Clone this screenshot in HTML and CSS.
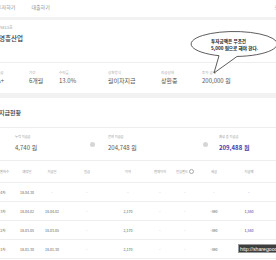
FILE: index.html
```html
<!DOCTYPE html>
<html lang="ko">
<head>
<meta charset="utf-8">
<link rel="stylesheet" href="styles.css">
</head>
<body>
<div class="page">
  <nav class="nav">
    <span>투자하기</span>
    <span>대출하기</span>
    <span class="nav-end">로그인</span>
  </nav>
  <div class="band"></div>

  <section class="head">
    <div class="loan-no">5813호</div>
    <div class="loan-name">영흥산업</div>
  </section>

  <section class="info">
    <div class="info-item"><div class="lbl">등급</div><div class="val">A+</div></div>
    <div class="info-item"><div class="lbl">기간</div><div class="val">6개월</div></div>
    <div class="info-item"><div class="lbl">수익률</div><div class="val">13.0%</div></div>
    <div class="info-item"><div class="lbl">상환방식</div><div class="val">월이자지급</div></div>
    <div class="info-item"><div class="lbl">지급상태</div><div class="val">상환중</div></div>
    <div class="info-item"><div class="lbl">투자 금액</div><div class="val">200,000 원</div></div>
  </section>
  <div class="band band-thick"></div>

  <h2 class="title">지급현황</h2>

  <section class="summary">
    <div class="sum-item first"><div class="sum-lbl">누적 지급금</div><div class="sum-val">4,740 원</div></div>
    <span class="sum-op"></span>
    <div class="sum-item second"><div class="sum-lbl">잔여 지급금</div><div class="sum-val">204,748 원</div></div>
    <span class="sum-op"></span>
    <div class="sum-item third"><div class="sum-lbl">예상 총 지급금</div><div class="sum-val total">209,488 원</div></div>
  </section>

  <div class="table">
    <div class="tr th">
      <span>상환차수</span><span>예정일</span><span>지급일</span><span>원금</span><span>이자</span><span>연체이자</span><span>안심펀드 <i class="q"></i></span><span>세금</span><span>지급액</span>
    </div>
    <div class="tr">
      <span>4차</span><span>18.04.30</span><span class="dash">-</span><span class="dash">-</span><span class="dash">-</span><span class="dash">-</span><span class="dash">-</span><span class="dash">-</span><span class="pay">-</span>
    </div>
    <div class="tr">
      <span>3차</span><span>18.04.02</span><span>18.04.02</span><span class="dash">-</span><span>2,170</span><span class="dash">-</span><span class="dash">-</span><span>-590</span><span class="pay">1,580</span>
    </div>
    <div class="tr">
      <span>2차</span><span>18.03.05</span><span>18.03.05</span><span class="dash">-</span><span>2,170</span><span class="dash">-</span><span class="dash">-</span><span>-590</span><span class="pay">1,580</span>
    </div>
    <div class="tr">
      <span>1차</span><span>18.01.30</span><span>18.01.30</span><span class="dash">-</span><span>2,170</span><span class="dash">-</span><span class="dash">-</span><span>-590</span><span class="pay">1,580</span>
    </div>
  </div>
</div>

<svg class="bubble" width="276" height="80" viewBox="0 0 276 80">
  <path d="M219,55.7 A43,12.5 0 1 1 237,56.47 L214,73 Z" fill="#fff" stroke="#333" stroke-width="0.8"/>
</svg>
<div class="bubble-text">
  <div>투자금액은 무조건</div>
  <div>5,000 원으로 해야 한다.</div>
</div>

<div class="tooltip">http://sharegoodinfo.tistory.com</div>
</body>
</html>
```

FILE: styles.css
```css
html, body {
  margin: 0;
  padding: 0;
}
body {
  width: 276px;
  height: 260px;
  overflow: hidden;
  position: relative;
  background: #fff;
  font-family: "Noto Sans CJK KR", "Noto Sans", sans-serif;
  color: #555;
}
.page {
  width: 276px;
}

/* nav */
.nav {
  height: 17px;
  width: 291px;
  margin-left: -3px;
  display: flex;
  align-items: center;
  gap: 16px;
  font-size: 5px;
  line-height: 6px;
  color: #8a8a8a;
  padding-bottom: 3px;
  box-sizing: border-box;
}
.nav-end {
  margin-left: auto;
  color: #aaa;
}
.band {
  height: 3px;
  background: #f2f2f2;
}
.band-thick {
  height: 5px;
}

/* head */
.head {
  height: 43px;
  box-sizing: border-box;
  border-bottom: 1px solid #eeeeee;
  padding-top: 4px;
}
.loan-no {
  font-size: 4px;
  line-height: 6px;
  color: #999;
}
.loan-name {
  margin-top: 3.5px;
  margin-left: -1px;
  font-size: 6.5px;
  line-height: 8px;
  color: #333;
  font-weight: 500;
}

/* info */
.info {
  height: 30px;
  box-sizing: border-box;
  padding-top: 6.5px;
  margin-left: -3px;
  display: grid;
  grid-template-columns: 32px 30px 49px 53px 41px 1fr;
}
.lbl {
  font-size: 3.5px;
  line-height: 5px;
  color: #aaa;
  white-space: nowrap;
}
.val {
  margin-top: 2px;
  font-size: 6px;
  line-height: 8px;
  color: #555;
  white-space: nowrap;
}

/* title */
.title {
  margin: 0;
  height: 30px;
  box-sizing: border-box;
  border-bottom: 1px solid #eeeeee;
  padding-top: 11px;
  margin-left: -1px;
  font-size: 6px;
  line-height: 8px;
  font-weight: 500;
  color: #333;
}

/* summary */
.summary {
  height: 33px;
  box-sizing: border-box;
  border-bottom: 1px solid #eeeeee;
  padding-top: 7px;
  display: flex;
  align-items: flex-start;
}
.sum-item.first { margin-left: 15px; width: 75px; }
.sum-item.second { margin-left: 13px; width: 95px; }
.sum-item.third { margin-left: 11px; }
.sum-op {
  width: 5px;
  height: 5px;
  border-radius: 50%;
  background: #d6d6d6;
  margin-top: 6.5px;
  flex: none;
}
.sum-lbl {
  font-size: 3.2px;
  line-height: 4px;
  color: #999;
  white-space: nowrap;
}
.sum-val {
  margin-top: 5px;
  font-size: 6px;
  line-height: 8px;
  color: #555;
  white-space: nowrap;
}
.sum-val.total {
  color: #4b3ca8;
  font-weight: 700;
}

/* table */
.table {
  margin-left: -8px;
  width: 284px;
}
.tr {
  display: grid;
  grid-template-columns: 22px 26px 24px 46px 36px 28px 22px 36px 34px 1fr;
  height: 19px;
  box-sizing: border-box;
  border-bottom: 1px solid #eeeeee;
  align-items: center;
  font-size: 3.6px;
  line-height: 5px;
  color: #666;
}
.tr span {
  text-align: center;
  white-space: nowrap;
}
.tr.th {
  height: 22px;
  font-size: 3.3px;
  color: #999;
}
.tr .dash {
  color: #999;
}
.tr .pay {
  color: #4b3ca8;
}
.q {
  display: inline-block;
  width: 3px;
  height: 3px;
  border: 0.5px solid #aaa;
  border-radius: 50%;
  vertical-align: middle;
}

/* speech bubble overlay */
.bubble {
  position: absolute;
  left: 0;
  top: 0;
}
.bubble-text {
  position: absolute;
  left: 211px;
  top: 37.5px;
  font-size: 4.6px;
  line-height: 7.5px;
  font-weight: 700;
  color: #222;
  white-space: nowrap;
}

/* browser tooltip overlay */
.tooltip {
  position: absolute;
  left: 238px;
  top: 244px;
  width: 45px;
  height: 9px;
  box-sizing: border-box;
  background: #3d3d3d;
  border: 0.5px solid #999;
  color: #fff;
  font-family: "Liberation Sans", Arial, sans-serif;
  font-size: 5.2px;
  line-height: 8px;
  padding-left: 1px;
  white-space: nowrap;
  overflow: hidden;
}
```
